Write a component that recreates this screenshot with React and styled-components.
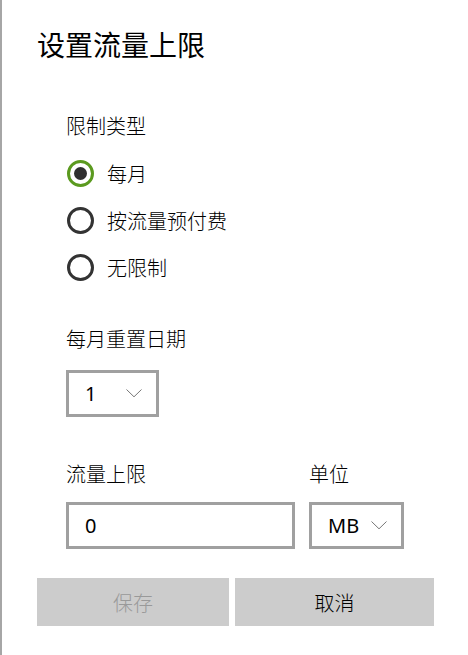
import React, { useState } from "react";
import styled, { createGlobalStyle } from "styled-components";

const GlobalStyle = createGlobalStyle`
  html, body {
    margin: 0;
    padding: 0;
    background: #ffffff;
  }
  body {
    font-family: "Segoe UI", "Noto Sans", "Noto Sans CJK SC", sans-serif;
    color: #000;
  }
`;

const Page = styled.div`
  min-height: 100vh;
  box-sizing: border-box;
  border-left: 2px solid #a6a6a6;
  padding: 26px 0 0 35px;
`;

const Title = styled.h1`
  margin: 0;
  font-size: 28px;
  line-height: 36px;
  font-weight: 400;
  font-family: "Noto Sans CJK SC", sans-serif;
`;

const Body = styled.div`
  padding-left: 29px;
`;

const Label = styled.div`
  font-size: 20px;
  line-height: 28px;
  font-weight: 300;
  font-family: "Noto Sans CJK SC", sans-serif;
  margin-top: ${({ $top }) => $top || 0}px;
`;

const RadioList = styled.div`
  display: flex;
  flex-direction: column;
  margin-top: 10px;
`;

const RadioRow = styled.label`
  display: flex;
  align-items: center;
  height: 47px;
  gap: 13px;
  font-size: 20px;
  font-weight: 300;
  font-family: "Noto Sans CJK SC", sans-serif;
  cursor: pointer;
`;

const RadioCircle = styled.span`
  width: 27px;
  height: 27px;
  box-sizing: border-box;
  border-radius: 50%;
  border: 3px solid ${({ $checked }) => ($checked ? "#5b9a1f" : "#333")};
  display: flex;
  align-items: center;
  justify-content: center;
  margin-left: 1px;

  &::after {
    content: "";
    display: ${({ $checked }) => ($checked ? "block" : "none")};
    width: 13px;
    height: 13px;
    border-radius: 50%;
    background: #2f2f2f;
  }
`;

const Select = styled.div`
  box-sizing: border-box;
  width: ${({ $w }) => $w}px;
  height: 47px;
  border: 3px solid #a0a0a0;
  display: flex;
  align-items: center;
  justify-content: space-between;
  padding: 0 14px 0 16px;
  font-size: 20px;
  font-family: "Segoe UI", "Noto Sans", sans-serif;
  margin-top: ${({ $top }) => $top || 0}px;
`;

const Chevron = () => (
  <svg width="16" height="9" viewBox="0 0 16 9" fill="none">
    <path d="M0.5 0.5 L8 7.8 L15.5 0.5" stroke="#777" strokeWidth="1" />
  </svg>
);

const LimitRow = styled.div`
  display: flex;
  gap: 14px;
  margin-top: 43px;
`;

const Field = styled.div`
  display: flex;
  flex-direction: column;
  gap: 14px;
`;

const Input = styled.input`
  box-sizing: border-box;
  width: 229px;
  height: 47px;
  border: 3px solid #a0a0a0;
  padding: 0 16px;
  font-size: 20px;
  font-family: "Segoe UI", "Noto Sans", sans-serif;
  color: #000;
  outline: none;
`;

const Buttons = styled.div`
  display: flex;
  gap: 6px;
  margin-top: 29px;
`;

const Button = styled.button`
  width: ${({ $w }) => $w}px;
  height: 48px;
  border: none;
  background: #cccccc;
  font-size: 20px;
  font-weight: 300;
  font-family: "Noto Sans CJK SC", sans-serif;
  color: ${({ disabled }) => (disabled ? "#999" : "#000")};
`;

const options = ["每月", "按流量预付费", "无限制"];

export default function App() {
  const [type, setType] = useState(0);
  const [limit, setLimit] = useState("0");

  return (
    <Page>
      <GlobalStyle />
      <Title>设置流量上限</Title>
      <Body>
        <Label $top={50}>限制类型</Label>
        <RadioList>
          {options.map((o, i) => (
            <RadioRow key={o} onClick={() => setType(i)}>
              <RadioCircle $checked={type === i} />
              {o}
            </RadioRow>
          ))}
        </RadioList>
        <Label $top={34}>每月重置日期</Label>
        <Select $w={93} $top={17}>
          <span>1</span>
          <Chevron />
        </Select>
        <LimitRow>
          <Field>
            <Label>流量上限</Label>
            <Input value={limit} onChange={(e) => setLimit(e.target.value)} />
          </Field>
          <Field>
            <Label>单位</Label>
            <Select $w={95}>
              <span>MB</span>
              <Chevron />
            </Select>
          </Field>
        </LimitRow>
      </Body>
      <Buttons>
        <Button $w={192} disabled>保存</Button>
        <Button $w={199}>取消</Button>
      </Buttons>
    </Page>
  );
}
